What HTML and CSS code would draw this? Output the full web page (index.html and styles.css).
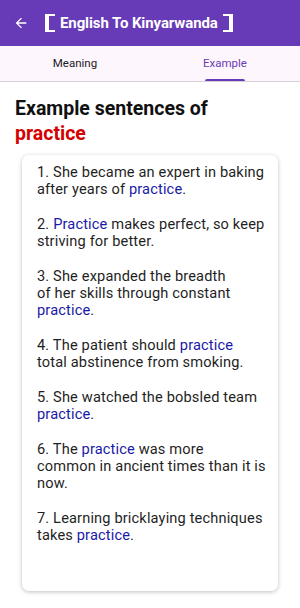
FILE: index.html
```html
<!DOCTYPE html>
<html lang="en">
<head>
    <meta charset="UTF-8">
    <meta name="viewport" content="width=device-width, initial-scale=1.0">
    <title>English To Kinyarwanda</title>
    <link rel="stylesheet" href="styles.css">
</head>
<body>

    <header class="app-bar">
        <button class="back-button" aria-label="Back">
            <svg width="16" height="16" viewBox="0 0 24 24"><path d="M20 11H7.83l5.59-5.59L12 4l-8 8 8 8 1.41-1.41L7.83 13H20v-2z" fill="#fff"/></svg>
        </button>
        <div class="app-title">
            <span class="bracket bracket-left"></span>
            <span class="title-text">English To Kinyarwanda</span>
            <span class="bracket bracket-right"></span>
        </div>
    </header>

    <nav class="tabs" role="tablist">
        <div class="tab" role="tab">Meaning</div>
        <div class="tab active" role="tab" aria-selected="true">Example</div>
    </nav>

    <main class="content">
        <h1 class="heading">Example sentences of <span class="word">practice</span></h1>

        <div class="card">
            <p>1. She became an expert in baking after years of <span class="hl">practice</span>.</p>
            <p>2. <span class="hl">Practice</span> makes perfect, so keep striving for better.</p>
            <p>3. She expanded the breadth<br>of her skills through constant <span class="hl">practice</span>.</p>
            <p>4. The patient should <span class="hl">practice</span><br>total abstinence from smoking.</p>
            <p>5. She watched the bobsled team <span class="hl">practice</span>.</p>
            <p>6. The <span class="hl">practice</span> was more<br>common in ancient times than it is<br>now.</p>
            <p>7. Learning bricklaying techniques takes <span class="hl">practice</span>.</p>
        </div>
    </main>

</body>
</html>
```

FILE: styles.css
```css
body {
    margin: 0;
    font-family: Roboto, "Noto Sans", sans-serif;
    background-color: #fff;
    color: #1c1b1f;
}

.app-bar {
    height: 46px;
    background-color: #673ab7;
    display: flex;
    align-items: center;
    padding-left: 12px;
    box-sizing: border-box;
}

.back-button {
    background: none;
    border: none;
    padding: 0;
    width: 18px;
    height: 18px;
    display: flex;
    align-items: center;
    justify-content: center;
    margin-right: 15px;
}

.app-title {
    display: flex;
    align-items: center;
    color: #fff;
}

.bracket {
    width: 6px;
    height: 14px;
    border: 0 solid #fff;
    border-top-width: 2.5px;
    border-bottom-width: 2.5px;
}

.bracket-left {
    border-left-width: 4px;
    margin-right: 5px;
}

.bracket-right {
    border-right-width: 4px;
    margin-left: 5px;
}

.title-text {
    font-weight: bold;
    font-size: 15px;
    letter-spacing: -0.1px;
}

.tabs {
    display: flex;
    height: 36px;
    background-color: #fdf6fd;
    border-bottom: 1px solid #d6d0d8;
    box-sizing: border-box;
}

.tab {
    flex: 1;
    display: flex;
    align-items: center;
    justify-content: center;
    font-size: 11.5px;
    color: #1c1b1f;
    position: relative;
    padding-bottom: 2px;
}

.tab.active {
    color: #6a3bb3;
}

.tab.active::after {
    content: "";
    position: absolute;
    bottom: 0;
    left: 50%;
    width: 40px;
    margin-left: -20px;
    height: 2.5px;
    border-radius: 2px 2px 0 0;
    background-color: #673ab7;
}

.content {
    padding: 14px 22px 16px 15px;
}

.heading {
    margin: 0 0 9px 0;
    font-size: 19.5px;
    line-height: 25px;
    font-weight: bold;
    color: #111;
}

.word {
    color: #d50000;
}

.card {
    background-color: #fff;
    border-radius: 7px;
    box-shadow: 0 1px 4px rgba(0,0,0,0.25);
    margin-left: 7px;
    padding: 9px 12px 54px 15px;
    height: 436px;
    box-sizing: border-box;
}

.card p {
    margin: 0 0 17.3px 0;
    font-size: 14.6px;
    line-height: 17.3px;
    letter-spacing: 0.15px;
    color: #1f1f1f;
}

.hl {
    color: #1a1aa8;
}
```
